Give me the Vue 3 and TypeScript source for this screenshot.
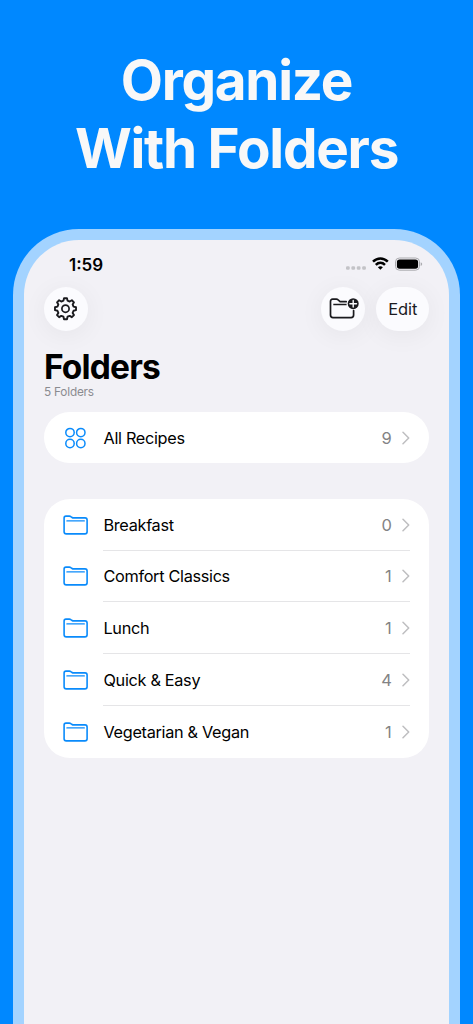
<script setup lang="ts">
interface Folder {
  name: string
  count: number
}

const folders: Folder[] = [
  { name: 'Breakfast', count: 0 },
  { name: 'Comfort Classics', count: 1 },
  { name: 'Lunch', count: 1 },
  { name: 'Quick & Easy', count: 4 },
  { name: 'Vegetarian & Vegan', count: 1 },
]

// Outline of an eight-toothed gear centred on (12, 12).
function gearPath(outer: number, inner: number): string {
  const points: string[] = []
  for (let i = 0; i < 8; i++) {
    const mid = (i * 45 * Math.PI) / 180
    const corners: [number, number][] = [
      [-0.25, inner],
      [-0.14, outer],
      [0.14, outer],
      [0.25, inner],
    ]
    for (const [offset, r] of corners) {
      const x = 12 + r * Math.sin(mid + offset)
      const y = 12 - r * Math.cos(mid + offset)
      points.push(`${x.toFixed(2)} ${y.toFixed(2)}`)
    }
  }
  return `M${points.join('L')}Z`
}

const gear = gearPath(10.6, 8.3)
</script>

<template>
  <main class="poster">
    <h1 class="headline">Organize<br />With Folders</h1>
    <div class="phone">
      <div class="screen">
        <div class="status">
          <span class="time">1:59</span>
          <svg class="status-icons" width="78" height="16" viewBox="0 0 78 16">
            <g fill="#c3c3c7">
              <rect x="1" y="9.2" width="3.7" height="3.6" rx="1.2" />
              <rect x="6.4" y="9.2" width="3.7" height="3.6" rx="1.2" />
              <rect x="11.8" y="9.2" width="3.7" height="3.6" rx="1.2" />
              <rect x="17.2" y="9.2" width="3.7" height="3.6" rx="1.2" />
            </g>
            <g fill="none" stroke="#000" stroke-width="2.5">
              <path d="M28 4.6C32.3 .4 38.5 .4 42.8 4.6" />
              <path d="M30.8 7.8C33.5 5.2 37.3 5.2 40 7.8" />
            </g>
            <path d="M32.9 10.2C34.3 8.9 36.5 8.9 37.9 10.2L35.4 12.8Z" fill="#000" />
            <rect x="50.5" y="1" width="24" height="12.2" rx="3.9" fill="none" stroke="#aaaaae" />
            <rect x="51.9" y="2.4" width="21.2" height="9.4" rx="2.7" fill="#000" />
            <path d="M75.7 5.2Q77.2 5.6 77.2 7.1Q77.2 8.6 75.7 9Z" fill="#aaaaae" />
          </svg>
        </div>
        <div class="toolbar">
          <button class="round" aria-label="Settings">
            <svg width="24" height="24" viewBox="0.5 0.3 24 24" fill="none" stroke="#1a1a1e" stroke-width="1.9" stroke-linejoin="round">
              <path :d="gear" />
              <circle cx="12" cy="12" r="3.6" stroke-width="1.7" />
            </svg>
          </button>
          <button class="round add" aria-label="Add folder">
            <svg class="add-icon" width="30" height="22" viewBox="-0.8 0.4 30 22" fill="none">
              <path d="M17.4 4.1H11.3L9 2.1Q8.5 1.6 7.6 1.6H3.9Q1.7 1.6 1.7 3.8V17.5Q1.7 20 4.2 20H22.3Q24.8 20 24.8 17.5V13" stroke="#1a1a1e" stroke-width="1.7" stroke-linecap="round" stroke-linejoin="round" />
              <path d="M4.5 6.9H17.8" stroke="#1a1a1e" stroke-width="1.5" />
              <circle cx="24.4" cy="6.1" r="5.5" fill="#1a1a1e" />
              <path d="M24.4 2.8V9.4M21.1 6.1H27.7" stroke="#fbfbfe" stroke-width="1.4" stroke-linecap="round" />
            </svg>
          </button>
          <button class="edit">Edit</button>
        </div>
        <h2 class="title">Folders</h2>
        <p class="subtitle">5 Folders</p>
        <section class="card all">
          <div class="row">
            <svg class="icon" width="26" height="24" viewBox="0 0 26 24" fill="none" stroke="#0a8bfb" stroke-width="1.5">
              <circle cx="7" cy="6.6" r="4.2" />
              <circle cx="17.8" cy="6.6" r="4.2" />
              <circle cx="7" cy="17.5" r="4.2" />
              <circle cx="17.8" cy="17.5" r="4.2" />
            </svg>
            <span class="name">All Recipes</span>
            <span class="count">9</span>
            <svg class="chevron" width="8" height="14" viewBox="0 0 8 14"><path d="M1 1.3L6.7 7L1 12.7" /></svg>
          </div>
        </section>
        <section class="card list">
          <div v-for="folder in folders" :key="folder.name" class="row">
            <svg class="icon" width="26" height="24" viewBox="0 0 26 24" fill="none" stroke="#0a8bfb" stroke-width="1.6" stroke-linejoin="round">
              <path d="M1.1 5.1Q1.1 3.1 3 3.1H6.3Q7.2 3.1 7.8 3.6L9.1 4.5Q9.7 4.9 10.5 4.9H22Q24.1 4.9 24.1 7V18.7Q24.1 20.9 21.9 20.9H3.3Q1.1 20.9 1.1 18.7Z" />
              <path d="M3.9 7.9H21.3" stroke-width="1.3" stroke-linecap="round" />
            </svg>
            <span class="name">{{ folder.name }}</span>
            <span class="count">{{ folder.count }}</span>
            <svg class="chevron" width="8" height="14" viewBox="0 0 8 14"><path d="M1 1.3L6.7 7L1 12.7" /></svg>
          </div>
        </section>
      </div>
    </div>
  </main>
</template>

<style>
body {
  margin: 0;
  background: #0088ff;
}
</style>

<style scoped>
.poster {
  box-sizing: border-box;
  width: 473px;
  height: 1024px;
  padding-top: 46px;
  overflow: hidden;
  background: #0088ff;
  color: #000;
  font-family: Inter, "Liberation Sans", sans-serif;
}
.headline {
  height: 183px;
  margin: 0;
  color: #f8f8f8;
  font-size: 54.8px;
  font-weight: 700;
  line-height: 68px;
  letter-spacing: -1.25px;
  text-align: center;
}
.phone {
  box-sizing: border-box;
  width: 447px;
  height: 860px;
  margin-left: 13.3px;
  padding: 10.7px 11.1px 0 10.7px;
  border-radius: 66px;
  background: #a3d3ff;
}
.screen {
  box-sizing: border-box;
  height: 860px;
  padding: 0 19.9px 0 20px;
  border-radius: 55px;
  background: #f2f1f6;
}
.status {
  display: flex;
  justify-content: space-between;
  height: 47px;
  padding: 17px 6px 0 25px;
  box-sizing: border-box;
}
.time {
  font-size: 17px;
  font-weight: 600;
  line-height: 17px;
}
.toolbar {
  display: flex;
  gap: 11.7px;
}
button {
  display: flex;
  align-items: center;
  justify-content: center;
  height: 44px;
  padding: 0;
  border: 0;
  border-radius: 22px;
  background: #fbfbfe;
  box-shadow: 0 4px 26px rgba(0, 0, 0, 0.055);
  color: #1a1a1e;
  font-family: inherit;
  font-size: 16.5px;
  letter-spacing: -0.1px;
}
.round {
  width: 44px;
}
.add {
  margin-left: auto;
}
.add-icon {
  overflow: visible;
}
.edit {
  width: 53px;
}
.title {
  margin: 19px 0 0;
  font-size: 33.5px;
  font-weight: 700;
  line-height: 34px;
  letter-spacing: -0.85px;
}
.subtitle {
  margin: 2px 0 0;
  color: #8b8b90;
  font-size: 11.8px;
  line-height: 12px;
  letter-spacing: -0.2px;
}
.card {
  border-radius: 26px;
  background: #fff;
}
.all {
  margin-top: 14px;
}
.list {
  margin-top: 35.3px;
}
.row {
  position: relative;
  display: flex;
  align-items: center;
  box-sizing: border-box;
  height: 51.8px;
  padding: 0 19.5px 0 19px;
}
.row + .row::before {
  content: "";
  position: absolute;
  top: -1px;
  left: 59.5px;
  right: 19.5px;
  height: 1px;
  background: #e5e5e7;
}
.icon {
  margin-right: 14.5px;
}
.name {
  flex: 1;
  font-size: 16.3px;
  letter-spacing: -0.32px;
}
.count {
  margin-right: 10px;
  color: #838385;
  font-size: 16.5px;
}
.chevron path {
  fill: none;
  stroke: #bebec0;
  stroke-width: 1.5;
  stroke-linecap: round;
  stroke-linejoin: round;
}
</style>
